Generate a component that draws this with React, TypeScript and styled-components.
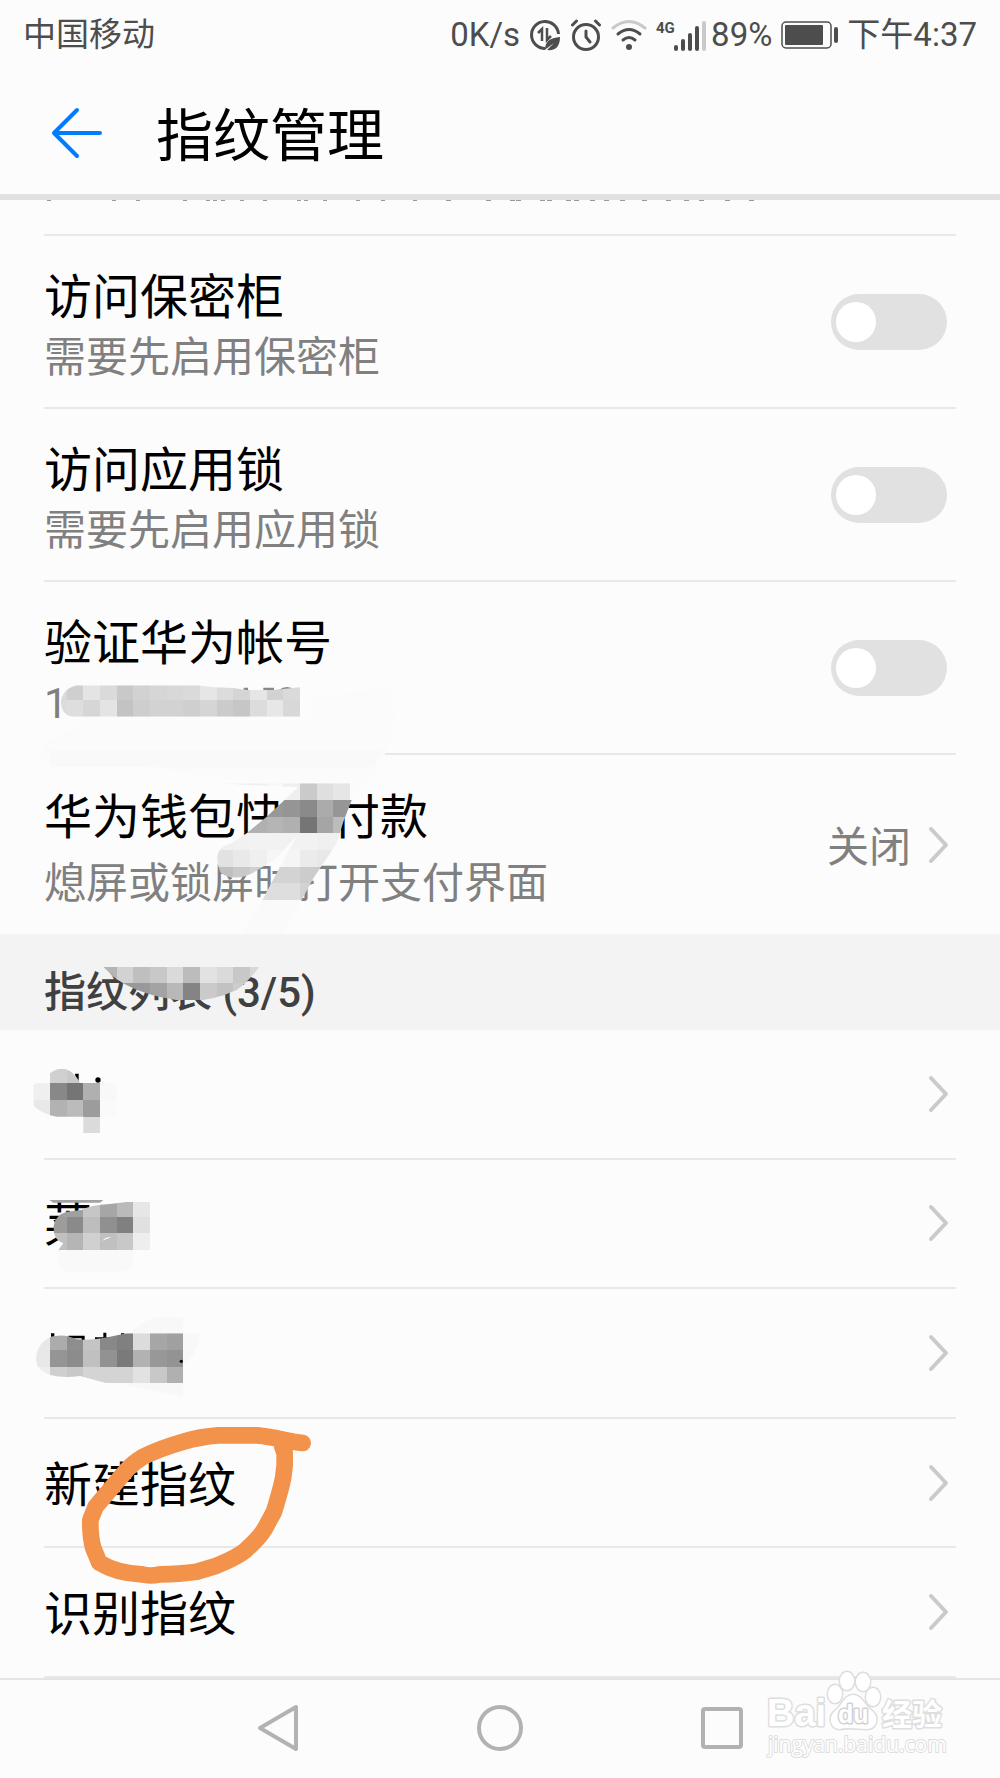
import React from "react";
import styled, { createGlobalStyle } from "styled-components";

const Global = createGlobalStyle`
  *, *::before, *::after { box-sizing: border-box; }
  body { margin: 0; background: #fcfcfc; }
  button, input { font: inherit; }
`;

const Page = styled.div`
  position: relative;
  display: flex;
  flex-direction: column;
  min-height: 100vh;
  overflow: hidden;
  background: #fcfcfc;
  color: #000;
  font-family: Roboto, "Noto Sans CJK SC", sans-serif;
  font-weight: 400;
`;

const StatusBar = styled.div`
  display: flex;
  align-items: center;
  justify-content: space-between;
  height: 70px;
  padding: 0 23px;
  color: #4d4d4d;
  font-size: 33px;
  line-height: 48px;
`;

const StatusIcons = styled.div`
  display: flex;
  align-items: center;
  gap: 9px;
`;

const Signal = styled.div`
  display: flex;
  align-items: center;
  gap: 5px;
`;

const StatusSvg = styled.svg`
  display: block;
  flex: none;
`;

const Header = styled.header`
  display: flex;
  align-items: center;
  gap: 54px;
  height: 130px;
  padding: 2px 50px 0;
  border-bottom: 6px solid #e1e1e1;
`;

const BackButton = styled.button`
  display: flex;
  padding: 0;
  border: 0;
  background: none;
`;

const Title = styled.h1`
  margin: 0;
  padding-top: 8px;
  font-size: 57px;
  line-height: 72px;
  font-weight: 400;
`;

const Clipped = styled.div`
  height: 36px;
  margin: 0 44px;
  border-bottom: 2px solid #e8e8e8;
`;

const SettingRow = styled.label<{ $last?: boolean }>`
  display: flex;
  align-items: center;
  justify-content: space-between;
  height: ${(p) => (p.$last ? 179 : 173)}px;
  margin: 0 44px;
  padding-right: ${(p) => (p.$last ? 7 : 9)}px;
  border-bottom: ${(p) => (p.$last ? "0" : "2px solid #e8e8e8")};
`;

const Labels = styled.span<{ $loose?: boolean }>`
  display: flex;
  flex-direction: column;
  gap: ${(p) => (p.$loose ? 6 : 0)}px;
  padding-top: 12px;
`;

const RowTitle = styled.span`
  font-size: 48px;
  line-height: 60px;
`;

const Summary = styled.span`
  color: #808080;
  font-size: 42px;
  line-height: 60px;
`;

const Toggle = styled.input`
  appearance: none;
  flex: none;
  display: flex;
  align-items: center;
  width: 116px;
  height: 56px;
  margin: 0;
  padding: 0 5px;
  border-radius: 28px;
  background: #e1e1e1;

  &::before {
    content: "";
    width: 40px;
    height: 40px;
    border-radius: 50%;
    background: #fff;
  }
  &:checked {
    justify-content: flex-end;
    background: #007dff;
  }
`;

const LinkButton = styled.button`
  display: flex;
  align-items: center;
  gap: 16px;
  padding: 0;
  border: 0;
  background: none;
  color: #808080;
  font-size: 42px;
  line-height: 60px;
`;

const ButtonText = styled.span`
  padding-top: 6px;
`;

const SectionTitle = styled.h2`
  display: flex;
  align-items: center;
  height: 96px;
  margin: 0;
  padding: 22px 44px 0;
  background: #f3f3f3;
  color: #404040;
  font-size: 42px;
  line-height: 60px;
  font-weight: 500;
`;

const List = styled.div`
  flex: 1;
  display: grid;
  grid-auto-rows: 1fr;
  margin: 0 44px;
`;

const ListItem = styled.button`
  display: flex;
  align-items: center;
  justify-content: space-between;
  min-height: 120px;
  padding: 0 7px 0 0;
  border: 0;
  border-bottom: 2px solid #e8e8e8;
  background: none;
  color: #000;
  font-size: 48px;
  line-height: 60px;
  text-align: left;
`;

const NavBar = styled.nav`
  display: grid;
  grid-template-columns: repeat(3, 222px);
  justify-content: center;
  height: 100px;
  padding-bottom: 2px;
  border-top: 2px solid #e4e4e4;
`;

const NavButton = styled.button`
  display: flex;
  align-items: center;
  justify-content: center;
  padding: 0;
  border: 0;
  background: none;
`;

const MarkLayer = styled.svg`
  position: absolute;
  top: 0;
  left: 0;
  pointer-events: none;
`;

const Watermark = styled.svg`
  position: absolute;
  right: 34px;
  bottom: 16px;
  pointer-events: none;
`;

const Chevron = () => (
  <StatusSvg width="22" height="38" viewBox="0 0 22 38" fill="none" stroke="#cacaca" strokeWidth="4" strokeLinecap="round" strokeLinejoin="round">
    <path d="M4 3l15 16L4 35" />
  </StatusSvg>
);

type MosaicRow = [x: number, y: number, colors: string];

/* Blurred-out blocks: each row lists grey levels as two-digit hex values. */
const Mosaic = ({ id, clip, rows }: { id: string; clip: string; rows: MosaicRow[] }) => (
  <g>
    <clipPath id={id}>
      <path d={clip} />
    </clipPath>
    <g clipPath={`url(#${id})`} shapeRendering="crispEdges">
      {rows.map(([x, y, colors]) =>
        colors.split(" ").map((c, i) => (
          <rect key={`${y}-${i}`} x={x + i * 50} y={y} width="50" height="50" fill={`#${c}${c}${c}`} />
        ))
      )}
    </g>
  </g>
);

const Marks = () => (
  <MarkLayer width="450" height="1778" viewBox="0 0 1350 5334" aria-hidden="true">
    <path
      fill="#fbfbfb"
      d="M140 2220Q220 2200 240 2160L940 2160V2090L1180 2060Q1195 2200 1150 2270L1060 2390L900 2360Q500 2320 380 2285L140 2300Q110 2260 140 2220Z"
    />
    <path fill="#f9f9f9" d="M150 2250H1150L1120 2300H150Z" />
    <path fill="#888" d="M731 2063h13v10h-13zM790 2063h32v9h-32zM836 2070q26-18 48 0z" />
    <Mosaic
      id="account"
      clip="M230 2056H590L640 2062L700 2064L740 2070H820L900 2062V2150H215C170 2140 170 2070 230 2056Z"
      rows={[
        [150, 2050, "d9 cf e4 da c9 d2 d6 d8 da e6 dc d5 e6 d2 da"],
        [150, 2100, "dc de d6 e4 c3 ce d2 d2 cf d5 cb c6 dc e7 d8"],
      ]}
    />
    <Mosaic
      id="wallet"
      clip="M670 2350H1050V2398H1056L1030 2465L1010 2530L940 2635L850 2802H728L790 2695L840 2600L892 2505L830 2575Q780 2606 760 2618Q700 2647 662 2618Q632 2545 690 2532L740 2500L800 2450L895 2361L740 2355Z"
      rows={[
        [650, 2350, "ef ef ef f7 ef ca df e6"],
        [750, 2400, "98 98 95 8a ab 96 96"],
        [700, 2450, "b0 b0 b5 b0 75 a5 bc"],
        [650, 2500, "f0 f1 f2 f2 f2 f2 f0 f0"],
        [650, 2550, "e2 e9 ef f6 f5 eb e8"],
        [650, 2600, "c0 c9 d0 d3 d3 cc cc"],
        [750, 2650, "e0 de de d2"],
        [700, 2700, "fa fa fa fa fa"],
        [700, 2750, "fa fa fa fa fa"],
      ]}
    />
    <Mosaic
      id="section"
      clip="M310 2900H778Q745 2945 710 2970Q600 3020 500 2995Q400 2975 340 2930Z"
      rows={[
        [300, 2900, "b5 d2 bf c8 da bc e2 da c8 d8"],
        [300, 2950, "99 99 99 a3 b8 84 ca c2 cc"],
      ]}
    />
    <path fill="#000" d="M225 3221h11v31h-6z" />
    <circle cx="294" cy="3240" r="8" fill="#000" />
    <Mosaic
      id="name1"
      clip="M150 3220Q180 3197 210 3213Q232 3230 240 3249H350V3350H300V3400H250V3350H170L150 3346Q110 3330 100 3315V3255Q120 3250 150 3220Z"
      rows={[
        [150, 3200, "d0 ca"],
        [100, 3250, "ef 88 75 b0 f8"],
        [100, 3300, "e8 b2 bb 9c fa"],
        [250, 3350, "db"],
      ]}
    />
    <path fill="#f9f9f9" d="M172 3750H400V3800Q380 3815 340 3817H200Q165 3800 172 3750Z" />
    <path fill="#a2a2a2" d="M148 3600H310L300 3608H160Z" />
    <Mosaic
      id="name2"
      clip="M160 3680Q165 3645 200 3635L245 3630Q270 3615 330 3612L380 3606H450V3750H175L190 3730Q160 3720 160 3680Z"
      rows={[
        [150, 3600, "a0 a0 c6 a6 ba e6"],
        [150, 3650, "9c 8a bd 90 80 e0"],
        [150, 3700, "c0 b5 d0 c0 c8 ee"],
      ]}
    />
    <path fill="#fff" d="M306 3722l12-9 17-2z" />
    <path fill="#f8f8f8" d="M400 3990Q450 3950 480 3950H550V4000H600Q590 4070 550 4090V4190L380 4155Z" />
    <path fill="#000" d="M153 4000h10v10h-10zM205 4007h49v14h-9v-6h-40zM285 4012h25v-14h9v14h12v7h-46zM363 4000h10v6h-10z" />
    <Mosaic
      id="name3"
      clip="M108 4080Q110 4030 150 4012Q190 3998 230 4018Q270 4022 330 4010L380 4000H550V4150H320L240 4128Q190 4135 150 4125Q110 4110 108 4080Z"
      rows={[
        [100, 4000, "e8 ac 8e c4 88 80 dc a6 a0"],
        [100, 4050, "e8 95 8c c0 92 7a b2 98 93"],
        [100, 4100, "ee cf c8 d4 d4 d4 e2 c8 b0"],
      ]}
    />
    <circle cx="544" cy="4084" r="5" fill="#000" />
    <path
      fill="none"
      stroke="#f3924a"
      strokeWidth="50"
      strokeLinecap="round"
      strokeLinejoin="round"
      d="M908 4329L880 4325Q800 4308 770 4306H655Q600 4310 550 4325Q480 4345 430 4370Q400 4388 380 4410L287 4520L271 4560Q270 4610 280 4645L298 4688Q350 4720 425 4723Q450 4730 480 4723Q540 4722 590 4715L650 4697Q710 4672 735 4652Q780 4612 795 4585L822 4535Q845 4460 850 4430L854 4395V4360L847 4340"
    />
  </MarkLayer>
);

/* Bottom edges of the description line that has scrolled under the header. */
const clippedTicks = [47, 112, 136, 183, 206, 213, 221, 240, 263, 297, 304, 323, 356, 381, 413];
const clippedTail = [446, 486, 510, 516, 540, 547, 566, 574, 590, 604, 620, 642, 666, 684, 699, 725, 749];

const toggles = [
  { title: "访问保密柜", summary: "需要先启用保密柜" },
  { title: "访问应用锁", summary: "需要先启用应用锁" },
  { title: "验证华为帐号", summary: "1" },
];

const fingerprints = [
  { text: "", label: "指纹 1" },
  { text: "莱", label: "指纹 2" },
  { text: "", label: "指纹 3" },
  { text: "新建指纹" },
  { text: "识别指纹" },
];

export default function App() {
  return (
    <Page>
      <Global />
      <StatusBar>
        <span>中国移动</span>
        <StatusIcons>
          <span>0K/s</span>
          <StatusSvg width="32" height="32" viewBox="0 0 32 32" fill="none" stroke="#4d4d4d">
            <path d="M16 29.500A13.500 13.500 0 1 1 29.500 15" strokeWidth="3" />
            <path d="M9 14l4-4v12M18 9v12l4-4" strokeWidth="2.500" />
            <path d="M16 31c0-9 5-12 15-13 0 9-4 14-13 13l7-7-8 6z" fill="#4d4d4d" stroke="none" />
          </StatusSvg>
          <StatusSvg width="32" height="32" viewBox="0 0 32 32" fill="none" stroke="#4d4d4d" strokeWidth="3" strokeLinecap="round">
            <circle cx="16" cy="18" r="12.500" />
            <path d="M16 12v6l4 5M2.500 6l4-4M29.500 6l-4-4" />
          </StatusSvg>
          <StatusSvg width="36" height="32" viewBox="0 0 36 32" fill="none" stroke="#4d4d4d" strokeWidth="3" strokeLinecap="round">
            <path d="M2 9Q18-4 34 9" stroke="#c9c9c9" />
            <path d="M7 15Q18 6 29 15M12 21Q18 16 24 21" />
            <circle cx="18" cy="28" r="3" fill="#4d4d4d" stroke="none" />
          </StatusSvg>
          <Signal>
            <StatusSvg width="50" height="34" viewBox="0 0 50 34" fill="#4d4d4d">
              <text x="0" y="15" fontFamily="Roboto, sans-serif" fontSize="15" fontWeight="700">4G</text>
              <rect x="18" y="27" width="4" height="6" rx="2" />
              <rect x="25" y="21" width="4" height="12" rx="2" />
              <rect x="32" y="15" width="4" height="18" rx="2" />
              <rect x="39" y="8" width="4" height="25" rx="2" />
              <rect x="46" y="3" width="4" height="30" rx="2" fill="#c9c9c9" />
            </StatusSvg>
            <span>89%</span>
          </Signal>
          <StatusSvg width="57" height="28" viewBox="0 0 57 28" fill="#4d4d4d">
            <rect x="1" y="1" width="49" height="26" rx="4" fill="none" stroke="#4d4d4d" strokeWidth="1.500" />
            <rect x="4" y="4" width="38" height="20" rx="1" />
            <rect x="53" y="6" width="4" height="16" rx="2" />
          </StatusSvg>
          <span>下午4:37</span>
        </StatusIcons>
      </StatusBar>

      <Header>
        <BackButton aria-label="返回">
          <StatusSvg width="52" height="52" viewBox="0 0 52 52" fill="none" stroke="#007dff" strokeWidth="4" strokeLinecap="round" strokeLinejoin="round">
            <path d="M50 26H4M27 3L4 26l23 23" />
          </StatusSvg>
        </BackButton>
        <Title>指纹管理</Title>
      </Header>

      <Clipped>
        <StatusSvg width="720" height="2" viewBox="44 0 720 2" aria-hidden="true" fill="#999">
          {clippedTicks.map((x) => (
            <rect key={x} x={x} y="0" width="4" height="1" />
          ))}
          {clippedTail.map((x) => (
            <rect key={x} x={x} y="0" width="5" height="1" />
          ))}
        </StatusSvg>
      </Clipped>

      {toggles.map((row) => (
        <SettingRow key={row.title}>
          <Labels>
            <RowTitle>{row.title}</RowTitle>
            <Summary>{row.summary}</Summary>
          </Labels>
          <Toggle type="checkbox" role="switch" />
        </SettingRow>
      ))}
      <SettingRow as="div" $last>
        <Labels $loose>
          <RowTitle>华为钱包快捷付款</RowTitle>
          <Summary>熄屏或锁屏时打开支付界面</Summary>
        </Labels>
        <LinkButton>
          <ButtonText>关闭</ButtonText>
          <Chevron />
        </LinkButton>
      </SettingRow>

      <SectionTitle>指纹列表 (3/5)</SectionTitle>
      <List>
        {fingerprints.map((item, i) => (
          <ListItem key={i} aria-label={item.label}>
            <ButtonText>{item.text}</ButtonText>
            <Chevron />
          </ListItem>
        ))}
      </List>

      <NavBar>
        <NavButton aria-label="返回">
          <StatusSvg width="42" height="48" viewBox="0 0 42 48" fill="none" stroke="#b2b2b2" strokeWidth="4" strokeLinejoin="round">
            <path d="M39 3v42L3 24z" />
          </StatusSvg>
        </NavButton>
        <NavButton aria-label="主页">
          <StatusSvg width="46" height="46" viewBox="0 0 46 46" fill="none" stroke="#b2b2b2" strokeWidth="4">
            <circle cx="23" cy="23" r="21" />
          </StatusSvg>
        </NavButton>
        <NavButton aria-label="最近任务">
          <StatusSvg width="42" height="42" viewBox="0 0 42 42" fill="none" stroke="#b2b2b2" strokeWidth="4">
            <rect x="2" y="2" width="38" height="38" rx="2" />
          </StatusSvg>
        </NavButton>
      </NavBar>

      <Marks />

      <Watermark width="200" height="92" viewBox="0 0 200 92" fill="#fff" stroke="#dedede" strokeWidth="3" strokeLinejoin="round" paintOrder="stroke" fontFamily='"Liberation Sans", "Noto Sans CJK SC", sans-serif'>
        <text x="1" y="56" fontSize="38" fontWeight="700">Bai</text>
        <ellipse cx="69" cy="24" rx="7" ry="9" />
        <ellipse cx="81" cy="11" rx="7" ry="9" />
        <ellipse cx="97" cy="12" rx="7" ry="9" />
        <ellipse cx="107" cy="27" rx="7" ry="9" />
        <path d="M87 25c9 0 11 10 19 16 8 7 4 18-5 18-8 0-20-2-27 0-10 0-12-12-5-18 8-6 9-16 18-16z" />
        <text x="72" y="53" fontSize="25" fontWeight="700" stroke="#d2d2d2">du</text>
        <text x="116" y="55" fontSize="30" fontWeight="700">经验</text>
        <text x="2" y="82" fontSize="21" fontFamily='"Open Sans", sans-serif' strokeWidth="2">jingyan.baidu.com</text>
      </Watermark>
    </Page>
  );
}
